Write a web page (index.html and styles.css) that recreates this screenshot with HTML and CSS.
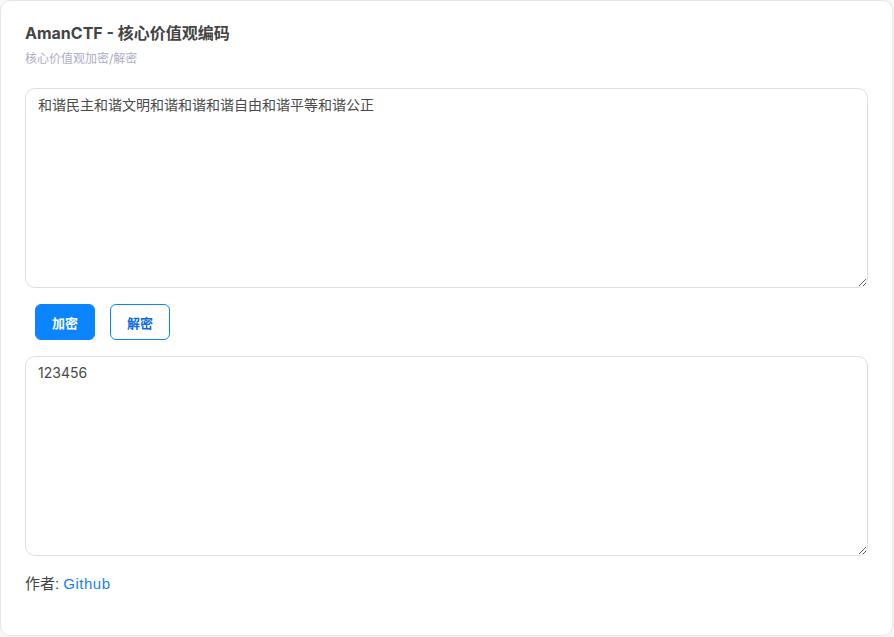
FILE: index.html
```html
<!DOCTYPE html>
<html>
<head>
    <meta charset="utf-8">
    <link rel="stylesheet" href="styles.css">
</head>
<body>
    <div class="card">
        <div class="title">AmanCTF - 核心价值观编码</div>
        <div class="subtitle">核心价值观加密/解密</div>
        <textarea class="box" id="input">和谐民主和谐文明和谐和谐和谐自由和谐平等和谐公正</textarea>
        <div class="actions">
            <button class="btn primary">加密</button>
            <button class="btn outline">解密</button>
        </div>
        <textarea class="box" id="output">123456</textarea>
        <div class="footer">作者: <a href="#">Github</a></div>
    </div>
</body>
</html>
```

FILE: styles.css
```css
body {
    margin: 0;
    font-family: Inter, "Noto Sans CJK SC", sans-serif;
    background-color: #f7f7f7;
    color: #444;
}

.card {
    height: 636px;
    width: 893px;
    box-sizing: border-box;
    border: 1px solid #e6e6e6;
    border-radius: 10px;
    background-color: #fff;
    padding: 21px 24px 0 24px;
}

.title {
    font-size: 16px;
    font-weight: 700;
    line-height: 22px;
    color: #444;
}

.subtitle {
    font-size: 12px;
    line-height: 16px;
    color: #aeadc6;
    margin-top: 7px;
}

.box {
    display: block;
    width: 100%;
    height: 200px;
    box-sizing: border-box;
    margin: 0;
    padding: 6px 12px;
    border: 1px solid #dedede;
    border-radius: 10px;
    font-family: Inter, "Noto Sans CJK SC", sans-serif;
    font-size: 14px;
    line-height: 20px;
    color: #4a4a4a;
    outline: none;
}

#input {
    margin-top: 21px;
}

.actions {
    display: flex;
    gap: 15px;
    padding: 16px 10px;
}

.btn {
    width: 60px;
    height: 36px;
    border-radius: 6px;
    font-family: Inter, "Noto Sans CJK SC", sans-serif;
    font-size: 13px;
    font-weight: 700;
    cursor: pointer;
}

.primary {
    background-color: #0a84ff;
    border: 1px solid #0a84ff;
    color: #fff;
}

.outline {
    background-color: #fff;
    border: 1px solid #0a84ff;
    color: #0a6be0;
}

.footer {
    margin-top: 18px;
    font-family: "Liberation Sans", "Noto Sans CJK SC", sans-serif;
    font-size: 15px;
    line-height: 20px;
}

.footer a {
    color: #1a7ff5;
    letter-spacing: 0.5px;
    text-decoration: none;
}
```
